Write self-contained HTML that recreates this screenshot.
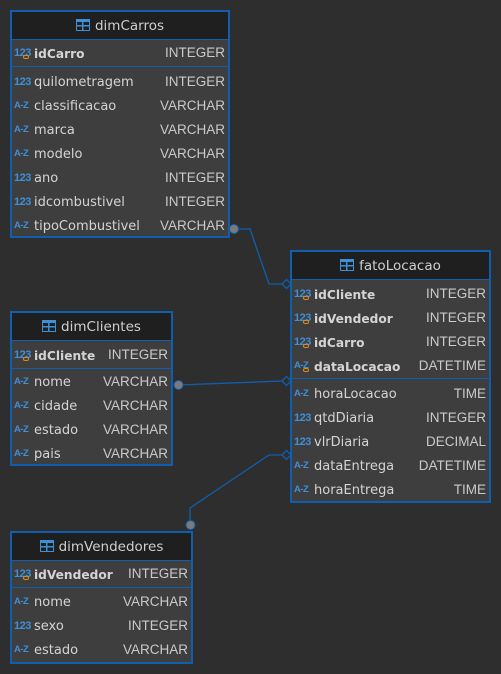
<!DOCTYPE html><html><head><style>
body{margin:0;width:501px;height:674px;background:#2e2e2e;font-family:"DejaVu Sans","Liberation Sans",sans-serif;overflow:hidden;position:relative}
.t{position:absolute;border:2px solid #0f5fae;background:#3e3e3e;box-sizing:border-box}
.h{position:absolute;left:0;right:0;top:0;height:27px;background:#1f1f1f;border-bottom:1px solid #0f5fae;color:#cfcfcf;font-size:13.5px;line-height:28px;text-align:center}
.h i{display:inline-block;width:14px;height:12px;border:1.5px solid #3d8fd6;margin-right:5px;vertical-align:-1px;box-sizing:border-box;background:linear-gradient(#3d8fd6,#3d8fd6) 0 3px/100% 1.5px no-repeat,linear-gradient(#3d8fd6,#3d8fd6) 5px 0/1.5px 100% no-repeat;border-top-width:3px}
.s{position:absolute;left:0;right:0;height:1px;background:#0f5fae}
.r{position:absolute;left:0;right:0;height:24px;line-height:28px;font-size:13px;color:#d4d4d4}
.r .n{position:absolute;left:22px}
.r .y{position:absolute;right:3px;color:#cacaca;font-family:"Liberation Sans",sans-serif;font-size:13.5px;line-height:26px}
.r.b .n{font-weight:bold;font-size:12.2px}
.ic{position:absolute;left:2px;top:0;width:18px;color:#3f8fd8;font-size:11px;font-weight:bold;font-family:"Liberation Sans",sans-serif;letter-spacing:-0.5px;line-height:26px}
.az{font-size:9.5px}
.k{position:absolute;left:11px;top:15px;width:6px;height:4px;border:1px solid #e08a1a;border-radius:3px;box-sizing:border-box}
</style></head><body>
<svg width="501" height="674" style="position:absolute;left:0;top:0">
<g stroke="#0f5fae" stroke-width="1.3" fill="none">
<polyline points="234,229 250,229 269,284 282,284"/>
<polyline points="178,385 282,381"/>
<polyline points="190,524 190,508 269,455 282,455"/>
<path d="M282,284 L286.5,279.5 L291,284 L286.5,288.5Z" fill="#2e2e2e"/>
<path d="M282,381 L286.5,376.5 L291,381 L286.5,385.5Z" fill="#2e2e2e"/>
<path d="M282,455 L286.5,450.5 L291,455 L286.5,459.5Z" fill="#2e2e2e"/>
</g>
<g fill="#7a7a7a" stroke="#0f5fae" stroke-width="1"><circle cx="234" cy="229" r="4.5"/><circle cx="178.5" cy="385" r="4.5"/><circle cx="190.5" cy="525" r="4.5"/></g>
</svg>

<div class="t" style="left:10px;top:10px;width:220px;height:228px">
<div class="h"><i></i>dimCarros</div>
<div class="r b" style="top:28px"><span class="ic">123</span><span class="k"></span><span class="n">idCarro</span><span class="y">INTEGER</span></div>
<div class="s" style="top:54px"></div>
<div class="r" style="top:57px"><span class="ic">123</span><span class="n">quilometragem</span><span class="y">INTEGER</span></div>
<div class="r" style="top:81px"><span class="ic az">A-Z</span><span class="n">classificacao</span><span class="y">VARCHAR</span></div>
<div class="r" style="top:105px"><span class="ic az">A-Z</span><span class="n">marca</span><span class="y">VARCHAR</span></div>
<div class="r" style="top:129px"><span class="ic az">A-Z</span><span class="n">modelo</span><span class="y">VARCHAR</span></div>
<div class="r" style="top:153px"><span class="ic">123</span><span class="n">ano</span><span class="y">INTEGER</span></div>
<div class="r" style="top:177px"><span class="ic">123</span><span class="n">idcombustivel</span><span class="y">INTEGER</span></div>
<div class="r" style="top:201px"><span class="ic az">A-Z</span><span class="n">tipoCombustivel</span><span class="y">VARCHAR</span></div>
</div>

<div class="t" style="left:290px;top:250px;width:201px;height:253px">
<div class="h"><i></i>fatoLocacao</div>
<div class="r b" style="top:29px"><span class="ic">123</span><span class="k"></span><span class="n">idCliente</span><span class="y">INTEGER</span></div>
<div class="r b" style="top:53px"><span class="ic">123</span><span class="k"></span><span class="n">idVendedor</span><span class="y">INTEGER</span></div>
<div class="r b" style="top:77px"><span class="ic">123</span><span class="k"></span><span class="n">idCarro</span><span class="y">INTEGER</span></div>
<div class="r b" style="top:101px"><span class="ic az">A-Z</span><span class="k"></span><span class="n">dataLocacao</span><span class="y">DATETIME</span></div>
<div class="s" style="top:126px"></div>
<div class="r" style="top:129px"><span class="ic az">A-Z</span><span class="n">horaLocacao</span><span class="y">TIME</span></div>
<div class="r" style="top:153px"><span class="ic">123</span><span class="n">qtdDiaria</span><span class="y">INTEGER</span></div>
<div class="r" style="top:177px"><span class="ic">123</span><span class="n">vlrDiaria</span><span class="y">DECIMAL</span></div>
<div class="r" style="top:201px"><span class="ic az">A-Z</span><span class="n">dataEntrega</span><span class="y">DATETIME</span></div>
<div class="r" style="top:225px"><span class="ic az">A-Z</span><span class="n">horaEntrega</span><span class="y">TIME</span></div>
</div>

<div class="t" style="left:10px;top:311px;width:163px;height:155px">
<div class="h"><i></i>dimClientes</div>
<div class="r b" style="top:29px"><span class="ic">123</span><span class="k"></span><span class="n">idCliente</span><span class="y">INTEGER</span></div>
<div class="s" style="top:55px"></div>
<div class="r" style="top:56px"><span class="ic az">A-Z</span><span class="n">nome</span><span class="y">VARCHAR</span></div>
<div class="r" style="top:80px"><span class="ic az">A-Z</span><span class="n">cidade</span><span class="y">VARCHAR</span></div>
<div class="r" style="top:104px"><span class="ic az">A-Z</span><span class="n">estado</span><span class="y">VARCHAR</span></div>
<div class="r" style="top:128px"><span class="ic az">A-Z</span><span class="n">pais</span><span class="y">VARCHAR</span></div>
</div>

<div class="t" style="left:10px;top:531px;width:183px;height:133px">
<div class="h"><i></i>dimVendedores</div>
<div class="r b" style="top:28px"><span class="ic">123</span><span class="k"></span><span class="n">idVendedor</span><span class="y">INTEGER</span></div>
<div class="s" style="top:54px"></div>
<div class="r" style="top:56px"><span class="ic az">A-Z</span><span class="n">nome</span><span class="y">VARCHAR</span></div>
<div class="r" style="top:80px"><span class="ic">123</span><span class="n">sexo</span><span class="y">INTEGER</span></div>
<div class="r" style="top:104px"><span class="ic az">A-Z</span><span class="n">estado</span><span class="y">VARCHAR</span></div>
</div>
</body></html>
